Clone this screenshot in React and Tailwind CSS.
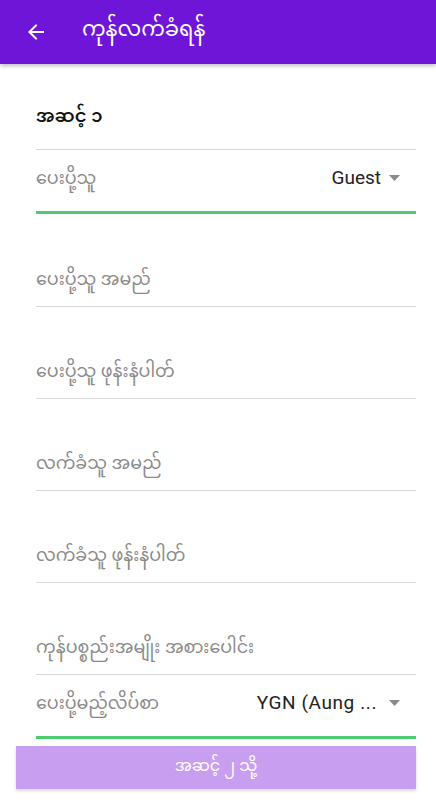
import React from 'react';

const font = { fontFamily: '"Noto Sans Myanmar", "Padauk", "Myanmar Text", "Noto Sans", Roboto, sans-serif' };

function Caret() {
  return (
    <svg width="11" height="6" viewBox="0 0 11 6" className="shrink-0">
      <path d="M0 0h11L5.5 6z" fill="#8a8a8a" />
    </svg>
  );
}

function SelectRow({ label, value, valueClass }) {
  return (
    <div className="h-16 flex items-center justify-between border-b-[3px] border-[#4ccb70]">
      <span className="text-[17.5px] text-[#8a8a8a]">{label}</span>
      <div className="flex items-center gap-[8px] pr-[16px] mb-[5px]">
        <span className={'text-[19px] text-[#222] ' + valueClass} style={{ fontFamily: 'Roboto, sans-serif' }}>{value}</span>
        <Caret />
      </div>
    </div>
  );
}

function TextRow({ label }) {
  return (
    <div className="h-[92px] flex items-end pb-[12px] border-b border-[#d9d9d9]">
      <span className="text-[17.5px] text-[#8a8a8a]">{label}</span>
    </div>
  );
}

export default function App() {
  return (
    <div className="w-[436px] h-[800px] bg-white overflow-hidden flex flex-col" style={font}>
      {/* Header */}
      <div className="h-16 shrink-0 bg-[#6f15d8] flex items-center shadow-[0_2px_4px_rgba(0,0,0,0.25)] relative z-10">
        <svg width="24" height="24" viewBox="0 0 24 24" className="ml-6">
          <path d="M20 11H7.83l5.59-5.59L12 4l-8 8 8 8 1.41-1.41L7.83 13H20v-2z" fill="#fff" />
        </svg>
        <span className="ml-[34px] text-white text-[21px]">ကုန်လက်ခံရန်</span>
      </div>

      {/* Form */}
      <div className="ml-9 mr-5 pt-[22px]">
        <div className="h-16 flex items-center border-b border-[#d9d9d9]">
          <span className="text-[18px] font-semibold text-[#111]">အဆင့် ၁</span>
        </div>
        <SelectRow label="ပေးပို့သူ" value="Guest" valueClass="" />
        <div className="pt-[1px]">
          <TextRow label="ပေးပို့သူ အမည်" />
          <TextRow label="ပေးပို့သူ ဖုန်းနံပါတ်" />
          <TextRow label="လက်ခံသူ အမည်" />
          <TextRow label="လက်ခံသူ ဖုန်းနံပါတ်" />
          <TextRow label="ကုန်ပစ္စည်းအမျိုး အစားပေါင်း" />
        </div>
        <SelectRow label="ပေးပို့မည့်လိပ်စာ" value="YGN (Aung ..." valueClass="tracking-[0.6px] mr-[4px]" />
      </div>

      {/* Button */}
      <div className="ml-4 mr-5 mt-[7px]">
        <button className="w-full h-[43px] bg-[#c89ef0] text-white text-[16px] shadow-[0_2px_3px_rgba(0,0,0,0.15)]">
          အဆင့် ၂ သို့
        </button>
      </div>
    </div>
  );
}
